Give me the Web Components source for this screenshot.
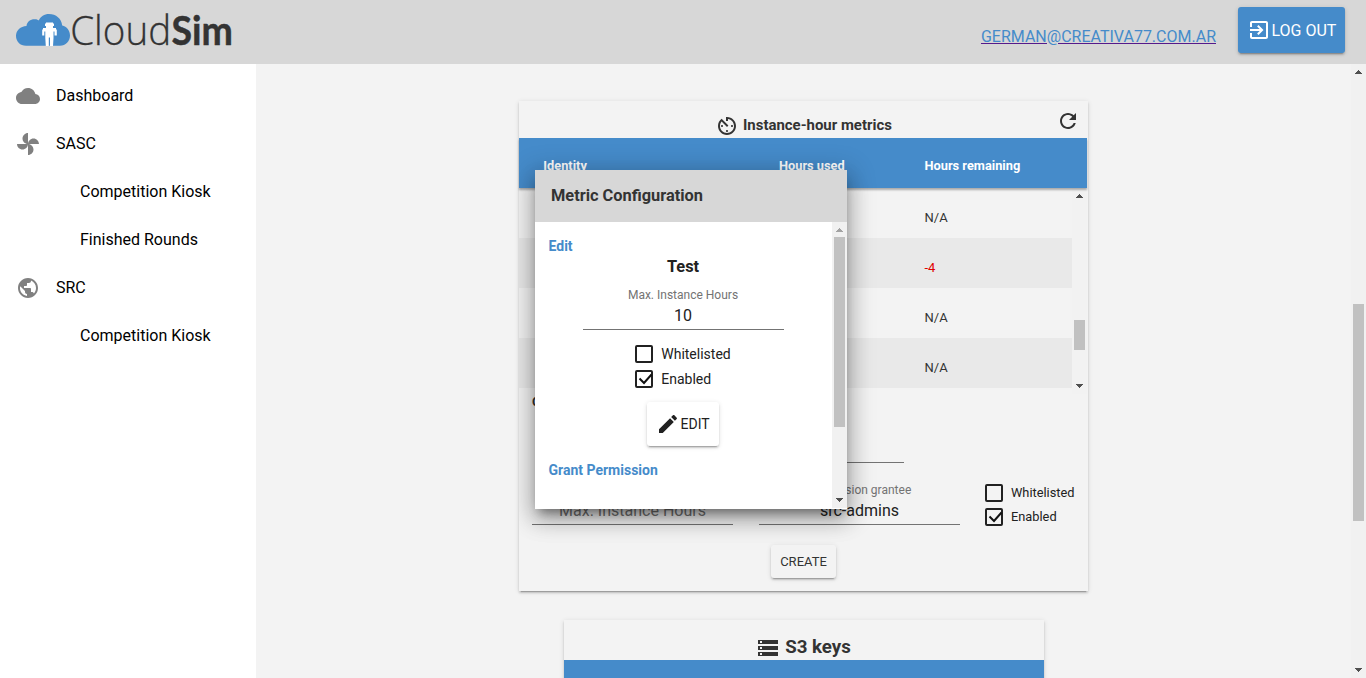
<!DOCTYPE html>
<html lang="en">
<head>
<meta charset="utf-8">
<title>CloudSim</title>
<style>
html,body{margin:0;height:100%;overflow:hidden}
body{font-family:Roboto,"Liberation Sans",sans-serif;color:#212121;background:#f2f2f2}
</style>
</head>
<body>
<cloud-app></cloud-app>
<script>
const define = (name, html) => customElements.define(name, class extends HTMLElement {
  constructor() {
    super();
    const t = document.createElement('template');
    t.innerHTML = html;
    this.attachShadow({ mode: 'open' }).appendChild(t.content);
  }
});
const defineLate = (name, render) => customElements.define(name, class extends HTMLElement {
  connectedCallback() {
    if (!this.shadowRoot) this.attachShadow({ mode: 'open' }).innerHTML = render(this);
  }
});

const ICONS = {
  cloud: 'M19.35 10.04C18.67 6.59 15.64 4 12 4 9.11 4 6.6 5.64 5.35 8.04 2.34 8.36 0 10.91 0 14c0 3.31 2.69 6 6 6h13c2.76 0 5-2.24 5-5 0-2.64-2.05-4.78-4.65-4.96z',
  toys: 'M12 12c0-3 2.5-5.5 5.5-5.5S23 9 23 12H12zm0 0c0 3-2.5 5.5-5.5 5.5S1 15 1 12h11zm0 0c-3 0-5.5-2.5-5.5-5.5S9 1 12 1v11zm0 0c3 0 5.5 2.5 5.5 5.5S15 23 12 23V12z',
  globe: 'M12 2C6.48 2 2 6.48 2 12s4.48 10 10 10 10-4.48 10-10S17.52 2 12 2zm-1 17.93c-3.95-.49-7-3.85-7-7.93 0-.62.08-1.21.21-1.79L9 15v1c0 1.1.9 2 2 2v1.93zm6.9-2.54c-.26-.81-1-1.39-1.9-1.39h-1v-3c0-.55-.45-1-1-1H8v-2h2c.55 0 1-.45 1-1V7h2c1.1 0 2-.9 2-2v-.41c2.93 1.19 5 4.06 5 7.41 0 2.08-.8 3.97-2.1 5.39z',
  timer: 'M11 17c0 .55.45 1 1 1s1-.45 1-1-.45-1-1-1-1 .45-1 1zm0-14v4h2V5.08c3.39.49 6 3.39 6 6.92 0 3.87-3.13 7-7 7s-7-3.13-7-7c0-1.68.59-3.22 1.58-4.42L12 13l1.41-1.41-6.8-6.8v.02C4.42 6.45 3 9.05 3 12c0 4.97 4.02 9 9 9 4.97 0 9-4.03 9-9s-4.03-9-9-9h-1zm7 9c0-.55-.45-1-1-1s-1 .45-1 1 .45 1 1 1 1-.45 1-1zM6 12c0 .55.45 1 1 1s1-.45 1-1-.45-1-1-1-1 .45-1 1z',
  refresh: 'M17.65 6.35C16.2 4.9 14.21 4 12 4c-4.42 0-7.99 3.58-7.99 8s3.57 8 7.99 8c3.73 0 6.84-2.55 7.73-6h-2.08c-.82 2.33-3.04 4-5.65 4-3.31 0-6-2.69-6-6s2.69-6 6-6c1.66 0 3.14.69 4.22 1.78L13 11h7V4l-2.35 2.35z',
  storage: 'M2 20h20v-4H2v4zm2-3h2v2H4v-2zM2 4v4h20V4H2zm4 3H4V5h2v2zm-4 7h20v-4H2v4zm2-3h2v2H4v-2z',
  exit: 'M10.09 15.59L11.5 17l5-5-5-5-1.41 1.41L12.67 11H3v2h9.67l-2.58 2.59zM19 3H5c-1.11 0-2 .9-2 2v4h2V5h14v14H5v-4H3v4c0 1.1.89 2 2 2h14c1.1 0 2-.9 2-2V5c0-1.1-.9-2-2-2z',
  pencil: 'M3 17.25V21h3.75L17.81 9.94l-3.75-3.75L3 17.25zM20.71 7.04c.39-.39.39-1.02 0-1.41l-2.34-2.34c-.39-.39-1.02-.39-1.41 0l-1.83 1.83 3.75 3.75 1.83-1.83z'
};
defineLate('md-icon', el => `<style>:host{display:block;flex:none;width:24px;height:24px}svg{display:block;fill:currentColor}</style>
<svg width="24" height="24" viewBox="0 0 24 24"><path d="${ICONS[el.getAttribute('name')]}"/></svg>`);

/* Classic scrollbar: arrows at both ends, thumb placed by --start and --size. */
defineLate('scroll-bar', el => `<style>
:host{display:flex;flex-direction:column;flex:none;width:15px;background:var(--track,#f1f1f1)}
svg{display:block;flex:none;fill:#505050}
.up{fill:${el.hasAttribute('at-top') ? '#a3a3a3' : '#505050'}}
i{display:block;flex:none;width:11px;height:var(--size);margin:var(--start) 2px 0;background:#c1c1c1}
b{flex:1}
</style>
<svg class="up" width="15" height="15" shape-rendering="crispEdges"><path d="M7 6h1v1h1v1h1v1h1v1H4V9h1V8h1V7h1z"/></svg>
<i></i><b></b>
<svg width="15" height="15" shape-rendering="crispEdges"><path d="M4 5h7v1h-1v1H9v1H8v1H7V8H6V7H5V6H4z"/></svg>`);

define('app-logo', `<style>:host{display:block;width:232px;height:64px}svg{display:block}
text{font-size:40px;fill:#333}</style>
<svg width="236" height="64" viewBox="0 0 236 64">
<path fill="#458bca" d="M26 45.800C20.300 45.800 16 41.500 16 36C16 30.400 20.500 26.300 26.500 26C27 21.500 30.500 19 35 19.200C37 19.200 38 19.800 38.800 20.500C40.500 16.500 44.300 14 49 14C56 14 61.500 18.500 62.200 25.500C66.800 26.500 70 30.500 70 35.500C70 41.200 65.600 45.800 60 45.800Z"/>
<path fill="#fff" d="M46 22.500h7v1h1v2.500h-1v2h-7v-2h-1v-2.500h1zM43 28h13v1.500h.8v6H54.500v-4H53.500v6.500l-.5 8h-3v-8.500h-1.200V46h-3l-.5-8v-6.500h-1v4H42.200v-6h.8z"/>
<text x="70.200" y="44.800" font-family="Open Sans" font-weight="300" stroke="#333" stroke-width=".3" textLength="101" lengthAdjust="spacingAndGlyphs">Cloud</text>
<text x="171.500" y="44.800" font-family="Lato" font-weight="700" stroke="#333" stroke-width=".5" textLength="61.300" lengthAdjust="spacingAndGlyphs">Sim</text>
</svg>`);

define('raised-button', `<style>
:host{display:flex;align-items:center;box-sizing:border-box;border-radius:3px;box-shadow:0 2px 2px 0 rgba(0,0,0,.14),0 1px 5px 0 rgba(0,0,0,.12),0 3px 1px -2px rgba(0,0,0,.2);white-space:nowrap}
</style><slot></slot>`);

define('app-header', `<style>
:host{display:flex;height:64px;background:#d7d7d7;box-sizing:border-box}
app-logo{margin-right:auto}
a{margin:27px 22px 0 0;font-size:16px;line-height:20px;height:20px;color:#458bca;text-decoration:underline;text-decoration-color:#551a8b}
raised-button{width:107px;height:46px;margin:7px 21px 0 0;padding-left:9px;background:#458bca;color:#fff;font-size:16px}
span{margin-left:.4px}
</style>
<app-logo></app-logo><a>GERMAN@CREATIVA77.COM.AR</a>
<raised-button><md-icon name="exit"></md-icon><span>LOG OUT</span></raised-button>`);

defineLate('nav-item', el => `<style>
:host{display:flex;align-items:center;height:48px;padding-left:${el.hasAttribute('icon') ? 16 : 80}px;font-size:16px;color:#000}
md-icon{color:#808080;margin-right:16px}
span{line-height:20px;margin-top:-1px}
</style>${el.hasAttribute('icon') ? `<md-icon name="${el.getAttribute('icon')}"></md-icon>` : ''}<span><slot></slot></span>`);

define('side-nav', `<style>:host{display:block;flex:none;width:256px;padding-top:8px;box-sizing:border-box;background:#fff}</style>
<nav-item icon="cloud">Dashboard</nav-item>
<nav-item icon="toys">SASC</nav-item>
<nav-item>Competition Kiosk</nav-item>
<nav-item>Finished Rounds</nav-item>
<nav-item icon="globe">SRC</nav-item>
<nav-item>Competition Kiosk</nav-item>`);

defineLate('check-box', el => `<style>
:host{display:flex;align-items:center;height:18px;gap:8px;white-space:nowrap}
i{display:block;flex:none;box-sizing:border-box;width:18px;height:18px;border:2px solid #212121;border-radius:2px}
svg{display:block;margin:-2px}
span{line-height:18px;margin-top:var(--label-shift,0)}
</style><i>${el.hasAttribute('checked') ? '<svg width="18" height="18"><path d="M4.500 8.500L9 13L16.500 4.500" fill="none" stroke="#111" stroke-width="2"/></svg>' : ''}</i><span><slot></slot></span>`);

defineLate('text-field', el => `<style>
:host{display:flex;flex-direction:column;width:201px;text-align:center;white-space:nowrap}
label{height:16px;font-size:12px;line-height:16px;color:#737373}
div{height:26px;font-size:16px;line-height:26px;border-bottom:1px solid #737373;color:${el.hasAttribute('empty') ? '#737373' : '#212121'}}
</style><label>${el.getAttribute('label') || ''}</label><div><slot></slot></div>`);

define('paper-card', `<style>
:host{display:flex;flex-direction:column;box-sizing:border-box;background:#f3f3f3;box-shadow:0 2px 2px 0 rgba(0,0,0,.14),0 1px 5px 0 rgba(0,0,0,.12),0 3px 1px -2px rgba(0,0,0,.2)}
</style><slot></slot>`);

define('metrics-table', `<style>
:host{display:block;width:568px}
.row{display:grid;grid-template-columns:236px 145.500px 1fr;padding-left:24px;height:50px;box-sizing:border-box;font-size:13px;line-height:18px;padding-top:21px;color:#333}
.head{position:relative;background:#458bca;color:#fff;font-weight:700;font-size:12.800px;padding-top:19px;padding-left:24.300px;grid-template-columns:235.700px 145.500px 1fr;box-shadow:0 2px 2px rgba(0,0,0,.3)}
.body{display:flex;height:206px}
.rows{flex:1}
.alt{background:#e9e9e9}
.row .neg{color:#e00000}
scroll-bar{--track:#f2f2f2;--start:117px;--size:30px}
</style>
<div class="row head"><span>Identity</span><span>Hours used</span><span>Hours remaining</span></div>
<div class="body"><div class="rows">
<div class="row"><span></span><span></span><span>N/A</span></div>
<div class="row alt"><span></span><span></span><span class="neg">-4</span></div>
<div class="row"><span></span><span></span><span>N/A</span></div>
<div class="row alt"><span></span><span></span><span>N/A</span></div>
</div><scroll-bar></scroll-bar></div>`);

define('metrics-card', `<style>
:host{display:block;width:569px}
paper-card{height:490px}
.title{display:flex;height:37px;flex:none}
.title .t{margin:13px 0 0 196px}
h2{margin:14px auto 0 4px;font-size:14.950px;line-height:20px;font-weight:700;color:#333}
.title .r{margin:8px 8px 0 0}
md-icon{color:#333}
h3{margin:0 0 0 13px;height:16px;font-size:13px;line-height:16px;color:#333}
.name{margin:10px auto 0 184px}
.form{display:flex;margin:19px 0 0 13px;gap:26px}
.checks{display:flex;flex-direction:column;gap:6px;margin:2px 0 0 -1px;font-size:12.800px;--label-shift:-1px}
raised-button{width:65px;height:33px;margin:19px 0 0 252px;justify-content:center;font-size:13px;color:#333}
</style>
<paper-card>
<div class="title"><md-icon class="t" name="timer"></md-icon><h2>Instance-hour metrics</h2><md-icon class="r" name="refresh"></md-icon></div>
<metrics-table></metrics-table>
<h3>Create</h3>
<text-field class="name"></text-field>
<div class="form"><text-field empty>Max. Instance Hours</text-field><text-field label="Permission grantee">src-admins</text-field>
<div class="checks"><check-box>Whitelisted</check-box><check-box checked>Enabled</check-box></div></div>
<raised-button>CREATE</raised-button>
</paper-card>`);

define('keys-card', `<style>
:host{display:block;width:480px}
paper-card{height:200px}
.title{display:flex;height:40px;flex:none;justify-content:center}
md-icon{margin:16px 5px 0 0;color:#333}
h2{margin:15px 0 0;font-size:18.720px;line-height:24px;color:#333}
.bar{flex:1;background:#458bca}
</style>
<paper-card><div class="title"><md-icon name="storage"></md-icon><h2>S3 keys</h2></div><div class="bar"></div></paper-card>`);

/* Modal dialog; its shadow is clipped to the card it belongs to. */
define('metric-dialog', `<style>
:host{display:flex;flex-direction:column;width:312px;height:339px;background:#fff;clip-path:inset(-40px -241px -82px -16px);box-shadow:0 12px 20px 1px rgba(0,0,0,.17),0 4px 24px 4px rgba(0,0,0,.22),0 8px 10px -5px rgba(0,0,0,.4)}
header{flex:none;height:52px;box-sizing:border-box;padding:16px 16px;background:#d7d7d7;font-size:16.380px;line-height:20px;font-weight:700;color:#333}
.body{display:flex;flex:1;min-height:0}
.content{width:296px;margin-right:1px;display:flex;flex-direction:column;align-items:center}
h4{align-self:flex-start;margin:0 0 0 13.500px;font-size:14px;line-height:20px;color:#458bca}
h4:first-child{margin-top:14px}
h3{margin:1px 0 0;font-size:16.380px;line-height:20px}
text-field{margin:10px 0 0;width:201px}
.checks{display:flex;flex-direction:column;gap:7px;margin:15px 0 14px;font-size:14px}
raised-button{width:72px;height:44px;padding-left:9px;font-size:14px;margin-bottom:14px}
raised-button span{margin-left:.6px}
scroll-bar{--start:0;--size:190px;margin-bottom:1px}
</style>
<header>Metric Configuration</header>
<div class="body"><div class="content">
<h4>Edit</h4><h3>Test</h3>
<text-field label="Max. Instance Hours">10</text-field>
<div class="checks"><check-box>Whitelisted</check-box><check-box checked>Enabled</check-box></div>
<raised-button><md-icon name="pencil"></md-icon><span>EDIT</span></raised-button>
<h4>Grant Permission</h4>
</div><scroll-bar at-top></scroll-bar></div>`);

define('cloud-app', `<style>
:host{display:flex;flex-direction:column;height:678px;overflow:hidden;position:relative}
.page{display:flex;flex:1;min-height:0}
main{flex:1;display:flex;flex-direction:column;align-items:center;padding-top:37px;gap:29px;box-sizing:border-box;overflow:hidden;background:#f3f3f3}
metrics-card,keys-card{flex:none}
.page>scroll-bar{--start:225px;--size:217px}
metric-dialog{position:absolute;left:535px;top:170px}
</style>
<app-header></app-header>
<div class="page"><side-nav></side-nav><main><metrics-card></metrics-card><keys-card></keys-card></main><scroll-bar></scroll-bar></div>
<metric-dialog></metric-dialog>`);
</script>
</body>
</html>
